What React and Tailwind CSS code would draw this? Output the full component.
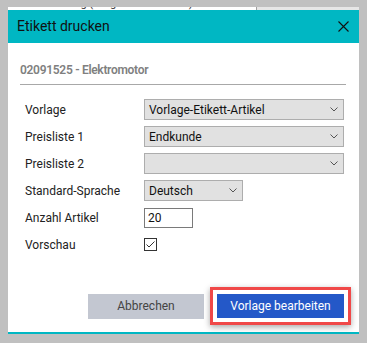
import React from "react";

const Chevron = () => (
  <svg width="8" height="5" viewBox="0 0 8 5" className="shrink-0">
    <path d="M0.5 0.5 L4 4 L7.5 0.5" fill="none" stroke="#555" strokeWidth="1" />
  </svg>
);

const Select = ({ value, width }) => (
  <div
    className={`${width} h-[21px] bg-[#e1e1e1] border border-[#adadad] flex items-center justify-between pl-[4px] pr-[5px] text-[12px] text-[#111]`}
  >
    <span>{value}</span>
    <Chevron />
  </div>
);

const Row = ({ label, children }) => (
  <div className="flex items-center h-[21px]">
    <div className="w-[119px] text-[12px] text-[#222]">{label}</div>
    {children}
  </div>
);

export default function App() {
  return (
    <div className="w-[367px] h-[343px] bg-[#c0c0c0] overflow-hidden pt-[7px] px-[8px] font-['Segoe_UI',Roboto,'Liberation_Sans',sans-serif]">
      {/* window behind the dialog, only its last pixel rows show */}
      <div className="h-[3px] flex overflow-hidden">
        <div className="w-[248px] bg-white overflow-hidden">
          <div className="text-[11px] leading-[11px] mt-[-9px] pl-[2px] text-[#333] whitespace-nowrap">
            Preissammlung (Vorgabe bearbeiten)
          </div>
        </div>
        <div className="w-[1px] bg-[#a0a0a0]" />
        <div className="flex-1 bg-[#e6e6e6]" />
      </div>

      <div className="h-[324px] bg-white flex flex-col border-b-2 border-[#00b7c3]">
        <div className="h-[33px] bg-[#00b7c3] flex items-center justify-between pl-[9px] pr-[10px]">
          <span className="text-[14px] text-[#111]">Etikett drucken</span>
          <svg width="11" height="11" viewBox="0 0 11 11">
            <path d="M0.5 0.5 L10.5 10.5 M10.5 0.5 L0.5 10.5" stroke="#111" strokeWidth="1.1" />
          </svg>
        </div>

        <div className="flex-1 flex flex-col pl-[12px] pr-[13px]">
          <div className="mt-[19px] text-[12px] leading-[16px] font-semibold text-[#808080] tracking-[-0.3px]">
            02091525 - Elektromotor
          </div>
          <div className="mt-[6px] h-[1px] bg-[#a8a8a8]" />

          <div className="mt-[14px] pl-[5px] flex flex-col gap-[6px]">
            <Row label="Vorlage">
              <Select value="Vorlage-Etikett-Artikel" width="w-[200px]" />
            </Row>
            <Row label="Preisliste 1">
              <Select value="Endkunde" width="w-[200px]" />
            </Row>
            <Row label="Preisliste 2">
              <Select value="" width="w-[200px]" />
            </Row>
            <Row label="Standard-Sprache">
              <Select value="Deutsch" width="w-[99px]" />
            </Row>
            <Row label="Anzahl Artikel">
              <div className="w-[49px] h-[20px] border border-[#7a7a7a] flex items-center pl-[3px] text-[12px] text-[#111]">
                20
              </div>
            </Row>
            <Row label="Vorschau">
              <div className="w-[13px] h-[13px] border border-[#333] flex items-center justify-center">
                <svg width="9" height="7" viewBox="0 0 9 7">
                  <path d="M0.5 3.5 L3 6 L8.5 0.5" fill="none" stroke="#333" strokeWidth="1" />
                </svg>
              </div>
            </Row>
          </div>

          <div className="mt-auto pb-[7px] flex items-center justify-end mr-[-5px]">
            <div className="w-[116px] h-[25px] bg-[#c3c7d1] flex items-center justify-center text-[12px] text-[#444]">
              Abbrechen
            </div>
            <div className="ml-[6px] border-[3px] border-[#f04848] p-[4px] bg-white shadow-[0_2px_6px_rgba(0,0,0,0.35)]">
              <div className="w-[127px] h-[24px] bg-[#2458c8] flex items-center justify-center text-[12px] text-white">
                Vorlage bearbeiten
              </div>
            </div>
          </div>
        </div>
      </div>
    </div>
  );
}
